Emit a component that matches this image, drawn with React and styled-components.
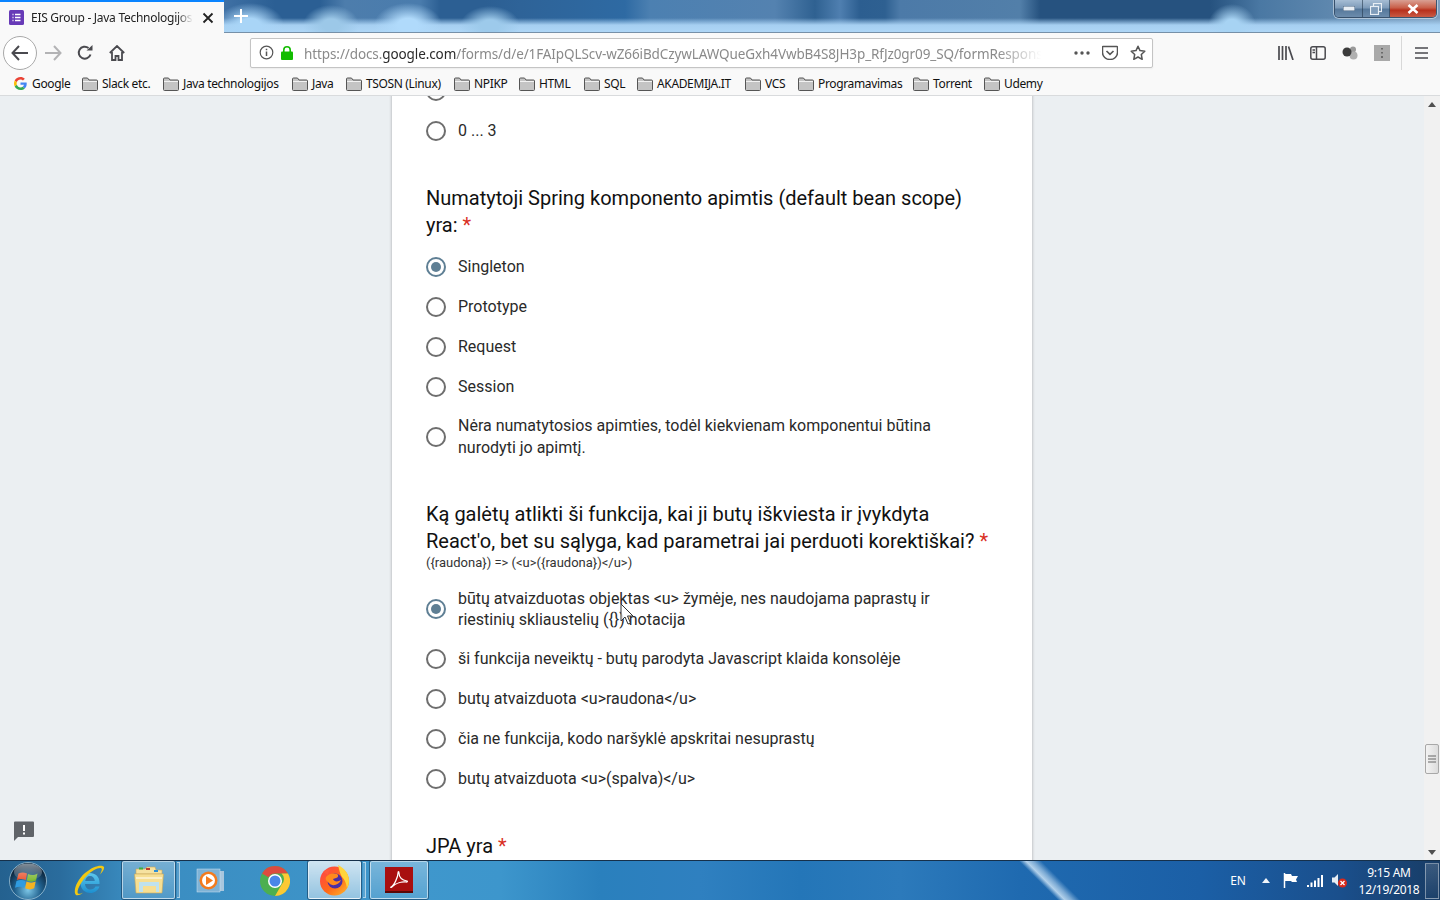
import React from "react";
import styled, { createGlobalStyle } from "styled-components";

const Global = createGlobalStyle`
  html, body { margin: 0; padding: 0; height: 100%; overflow: hidden; }
  * { box-sizing: border-box; }
  #root { height: 100%; }
`;

const Shell = styled.div`
  height: 100vh; display: flex; flex-direction: column; overflow: hidden; position: relative;
  font-family: "Noto Sans", "Open Sans", sans-serif;
`;

/* ---------- title strip ---------- */
const TitleStrip = styled.div`
  height: 33px; flex: none; display: flex; align-items: flex-start;
  border-bottom: 1px solid #7690a8;
  background:
    radial-gradient(ellipse 34px 22px at 250px 25px, #a9d5f7 30%, transparent),
    radial-gradient(ellipse 28px 20px at 331px 25px, #9cc8e8 30%, transparent),
    radial-gradient(ellipse 34px 22px at 408px 25px, #b0dafb 30%, transparent),
    radial-gradient(ellipse 30px 20px at 490px 26px, #9dcaeb 30%, transparent),
    radial-gradient(ellipse 24px 22px at 1232px 26px, #a7d3f3 30%, transparent),
    linear-gradient(180deg, transparent 0 18px, #a6cff1 25px, #aed6f6 100%),
    linear-gradient(90deg, #3f70a4 225px, #2b5f94 275px, #2b5f94 320px, #4d7dac 345px, #4a7cad 420px, #2c5f93 440px, #2c5f93 485px, #2e6398 520px, #2e6aa3 625px, #4c80b1 650px, #5482b0 775px, #2f6191 815px, #4f7fb0 840px, #2c5e90 860px, #2e6091 885px, #4c7aa8 900px, #527fa9 1020px, #26527f 1040px, #26527f 1210px, #4a78a3 1260px, #7d9fbf 1440px);
`;
const Tab = styled.div`
  width: 224px; height: 33px; flex: none; display: flex; align-items: center;
  background: #f9f9f9; border-top: 2px solid #0a84ff; padding-left: 9px; margin-bottom: -1px; position: relative; z-index: 1;
`;
const TabTitle = styled.span`
  font-size: 12px; margin-left: 7px; width: 162px; white-space: nowrap; overflow: hidden; color: #222;
  letter-spacing: -0.27px;
  mask-image: linear-gradient(90deg, #000 90%, transparent);
`;
const TabClose = styled.svg`
  margin-left: 9px; flex: none;
`;
const NewTab = styled.div`
  width: 34px; height: 32px; display: flex; align-items: center; justify-content: center;
`;
const WindowButtons = styled.div`
  margin-left: auto; margin-right: 3px; height: 18px; width: 103px; display: flex; flex: none;
  border: 1px solid rgba(40,60,85,.75); border-top: 0; border-radius: 0 0 5px 5px; overflow: hidden;
  box-shadow: 0 0 0 1px rgba(255,255,255,.45);
`;
const WinBtn = styled.div`
  flex: ${p => p.$grow}; display: flex; align-items: center; justify-content: center;
  background: ${p => p.$close ? "linear-gradient(180deg,#d9a093 0%,#c9604a 45%,#b8301c 60%,#c95a44 100%)" : "linear-gradient(180deg,#a6bdd4 0%,#7f9cba 45%,#56789b 55%,#6c8cac 100%)"};
  border-right: ${p => p.$close ? "0" : "1px solid rgba(30,50,70,.55)"};
`;

/* ---------- nav toolbar ---------- */
const NavBar = styled.div`
  height: 39px; flex: none; background: #f9f9f9; display: flex; align-items: center;
`;
const BackCircle = styled.div`
  width: 34px; height: 34px; margin-left: 3px; border-radius: 50%; background: #fff; border: 1px solid #a9a9a9;
  display: flex; align-items: center; justify-content: center; flex: none;
`;
const NavIcon = styled.div`
  width: 32px; height: 32px; display: flex; align-items: center; justify-content: center; flex: none;
`;
const UrlBar = styled.div`
  width: 903px; height: 30px; margin-left: 117px; flex: none; background: #fff; border: 1px solid #c4c4c4; border-radius: 2px;
  display: flex; align-items: center; padding-left: 8px; box-shadow: 0 1px 2px rgba(0,0,0,.06);
`;
const LockIcon = styled.svg`
  margin-left: 7px; flex: none;
`;
const UrlText = styled.div`
  width: 737px; flex: none; margin-left: 11px; padding-top: 2px; white-space: nowrap; overflow: hidden; font-size: 13.5px; color: #8a8a8a; letter-spacing: -0.1px;
  mask-image: linear-gradient(90deg, #000 94%, transparent);
  b { font-weight: 400; color: #2a2a2a; }
`;
const UrlActions = styled.div`
  display: flex; align-items: center; margin-left: 33px; gap: 12px; flex: none;
`;
const RightTools = styled.div`
  display: flex; align-items: center; margin-left: 117px; flex: none;
`;
const ToolSep = styled.div`
  width: 1px; height: 34px; background: #d8d8d8; margin: 0 3px 0 3px; flex: none;
`;

/* ---------- bookmarks ---------- */
const Bookmarks = styled.div`
  height: 24px; flex: none; background: #f9f9f9; border-bottom: 1px solid #d9dbdd; display: flex; align-items: center; padding-left: 14px;
`;
const Bookmark = styled.div`
  width: ${p => p.$w}px; flex: none; display: flex; align-items: center; gap: ${p => p.$gap}px;
  font-size: 12px; letter-spacing: -0.35px; color: #111; white-space: nowrap;
`;

/* ---------- page ---------- */
const Viewport = styled.div`
  flex: 1; min-height: 0; display: flex; background: #ebeff2; overflow: hidden;
`;
const PageArea = styled.div`
  flex: 1; display: flex; justify-content: center; overflow: hidden; position: relative;
`;
const Card = styled.main`
  width: 640px; margin-top: -25px; background: #fff; padding: 0 34px; flex: none; height: 900px;
  box-shadow: 0 0 3px rgba(0,0,0,.3);
  font-family: Roboto, "Noto Sans", sans-serif; color: #202124;
`;
const Question = styled.h2`
  margin: 34px 0 ${p => p.$desc ? "0" : "8px"};
  font-size: 20px; line-height: 27px; font-weight: 400; color: #111;
`;
const Star = styled.span`
  color: #d93025; margin-left: 5px;
`;
const Description = styled.div`
  font-size: 13px; line-height: 16px; color: #333; margin-bottom: 8px;
`;
const OptionRow = styled.div`
  display: flex; align-items: center; gap: 12px; min-height: ${p => p.$h || 40}px;
`;
const Radio = styled.span`
  width: 20px; height: 20px; border-radius: 50%; flex: none; display: flex; align-items: center; justify-content: center;
  border: 2px solid ${p => p.$on ? "#5f7f94" : "#6e6e6e"};
  &::after { content: ""; width: 10px; height: 10px; border-radius: 50%; background: ${p => p.$on ? "#5f7f94" : "transparent"}; }
`;
const OptionText = styled.div`
  font-size: 16px; line-height: ${p => p.$lh || 22}px; width: 490px; color: #2a2a2a;
`;
const Feedback = styled.div`
  position: absolute; left: 13px; bottom: 18px; width: 22px; height: 22px;
`;
const Cursor = styled.svg`
  position: absolute; left: 620px; top: 507px;
`;

/* ---------- scrollbar ---------- */
const ScrollBar = styled.div`
  width: 16px; flex: none; background: #f1f1f1; display: flex; flex-direction: column; align-items: center;
`;
const ScrollArrow = styled.div`
  height: 16px; display: flex; align-items: center; justify-content: center; ${p => p.$down ? "margin-top:auto;" : ""}
`;
const Thumb = styled.div`
  width: 14px; height: 30px; margin-top: 632px; background: linear-gradient(90deg,#f3f3f3,#dcdcdc); border: 1px solid #a8a8a8; border-radius: 2px;
  display: flex; align-items: center; justify-content: center;
`;

/* ---------- taskbar ---------- */
const Taskbar = styled.div`
  height: 40px; flex: none; display: flex; align-items: stretch; border-top: 1px solid #16304a; overflow: hidden;
  background:
    linear-gradient(45deg, transparent 748px, rgba(215,235,250,.8) 753px, rgba(215,235,250,.5) 758px, transparent 764px),
    linear-gradient(90deg, #24618f 0, #2a6c9d 60px, #3a8cc0 130px, #3f97cc 420px, #3d96cc 500px, #2a80bd 600px, #2f80c0 700px, #2476b8 800px, #2c7abb 900px, #1f6ab0 1020px, #1b5fa6 1200px, #1a4f8c 1340px, #183c65 1440px);
`;
const Slot = styled.div`
  width: ${p => p.$w}px; margin-left: ${p => p.$ml || 0}px; flex: none; display: flex; align-items: center; justify-content: center;
  ${p => p.$pinned ? `
    border: 1px solid rgba(255,255,255,.55); border-radius: 2px; margin-bottom: 1px;
    background: linear-gradient(180deg, rgba(255,255,255,${p.$bright ? ".75" : ".3"}), rgba(255,255,255,${p.$bright ? ".45" : ".12"}));
    box-shadow: 0 0 0 1px rgba(10,40,70,.5);
  ` : ""}
`;
const StackEdge = styled.div`
  width: 3px; margin: 1px 0 2px 2px; border: 1px solid rgba(255,255,255,.5); border-left: 0; flex: none; background: rgba(255,255,255,.15);
`;
const Tray = styled.div`
  margin-left: auto; display: flex; align-items: center; color: #fff; font-size: 12px;
`;
const TrayText = styled.span`
  width: ${p => p.$w}px; text-align: center; letter-spacing: -0.2px;
`;
const TrayIcon = styled.div`
  width: ${p => p.$w}px; display: flex; align-items: center; justify-content: center;
`;
const Clock = styled.div`
  width: 72px; text-align: center; line-height: 17px; font-size: 12px; letter-spacing: -0.3px; margin-left: 2px;
`;
const ShowDesktop = styled.div`
  width: 14px; height: 36px; margin: 0 1px 0 0; border: 1px solid rgba(255,255,255,.4); background: linear-gradient(180deg,rgba(255,255,255,.15),rgba(255,255,255,.02));
`;

/* ---------- icons ---------- */
const FolderIcon = () => (
  <svg width="16" height="14" viewBox="0 0 16 14">
    <path d="M.5 12.5V2a1 1 0 0 1 1-1h4l1.500 2h7.500a1 1 0 0 1 1 1v8.500a1 1 0 0 1-1 1h-13a1 1 0 0 1-1-1Z" fill="#c4c4c4" stroke="#555" />
    <path d="M1 4.500h14" stroke="#f2f2f2" />
  </svg>
);
const GoogleG = () => (
  <svg width="13" height="13" viewBox="0 0 48 48">
    <path fill="#EA4335" d="M24 9.5c3.5 0 6.7 1.3 9.1 3.5l6.8-6.8C35.800 2.400 30.300 0 24 0 14.600 0 6.500 5.400 2.600 13.200l7.900 6.100C12.400 13.700 17.700 9.500 24 9.500z"/>
    <path fill="#4285F4" d="M46.900 24.500c0-1.600-.1-3.100-.4-4.500H24v9h12.900c-.6 3-2.200 5.500-4.700 7.200l7.700 6c4.500-4.200 7-10.300 7-17.700z"/>
    <path fill="#FBBC05" d="M10.500 28.700c-.5-1.400-.8-3-.8-4.700s.3-3.200.8-4.700l-7.900-6.100C.9 16.500 0 20.100 0 24s.9 7.500 2.600 10.800l7.900-6.100z"/>
    <path fill="#34A853" d="M24 48c6.500 0 11.900-2.100 15.900-5.800l-7.700-6c-2.200 1.400-4.900 2.300-8.200 2.300-6.300 0-11.600-4.200-13.500-9.800l-7.900 6.100C6.500 42.600 14.600 48 24 48z"/>
  </svg>
);
const FormsIcon = () => (
  <svg width="15" height="15" viewBox="0 0 15 15">
    <rect width="15" height="15" rx="1.500" fill="#673ab7" />
    <path d="M3.500 4.500h1M6 4.500h5.500M3.500 7.500h1M6 7.500h5.500M3.500 10.500h1M6 10.500h5.500" stroke="#fff" strokeWidth="1.500" />
  </svg>
);
const ink = "#4a4a4f";
const Orb = () => (
  <svg width="38" height="38" viewBox="0 0 38 38">
    <defs>
      <radialGradient id="orb" cx="50%" cy="75%" r="65%"><stop offset="0" stopColor="#7cc6e6" /><stop offset=".55" stopColor="#1f5f8c" /><stop offset="1" stopColor="#0b2238" /></radialGradient>
      <linearGradient id="gloss" x1="0" y1="0" x2="0" y2="1"><stop offset="0" stopColor="#fff" stopOpacity=".5" /><stop offset="1" stopColor="#fff" stopOpacity=".05" /></linearGradient>
    </defs>
    <circle cx="19" cy="19" r="18.500" fill="url(#orb)" stroke="#9fc4d8" strokeWidth=".8" />
    <path d="M9.500 11.500c3-1.500 5.500-1.500 8.500 0l-1.200 6.500c-3-1.400-5.500-1.400-9 0Z" fill="#e8512b" />
    <path d="M19 12c3 1.500 6 1.500 9.500-.5L27 18.500c-3 1.500-6 1.500-9.200 0Z" fill="#7cb82f" />
    <path d="M7.500 19c3-1.400 6-1.400 9 0l-1.200 6.800c-3-1.500-6-1.500-9.300 0Z" fill="#2f9be0" />
    <path d="M17.500 19.500c3 1.500 6 1.500 9.200 0l-1.500 6.800c-3 1.500-6 1.500-9 0Z" fill="#f4b322" />
    <ellipse cx="19" cy="10" rx="14" ry="8.500" fill="url(#gloss)" />
  </svg>
);
const IeIcon = () => (
  <svg width="32" height="32" viewBox="0 0 32 32">
    <defs><linearGradient id="ie" x1="0" y1="0" x2="0" y2="1"><stop offset="0" stopColor="#5cc8ee" /><stop offset="1" stopColor="#1c8fd0" /></linearGradient></defs>
    <path d="M16.500 8c6 0 10 3.600 10 9.500v1.500H12c.3 3.500 2.500 5.500 5.500 5.500 2.300 0 4-1 5-3h4c-1.500 4-4.800 6.500-9.200 6.500C11.500 28 7.500 23.700 7.500 18S11 8 16.500 8Zm-4.300 8h9.600c-.2-3-2-5-4.800-5-2.600 0-4.400 2-4.800 5Z" fill="url(#ie)" />
    <path d="M3 30C-.5 26 4 15 12 8s17-9 19-6c.6 2-2 5.500-4 7.500 1-2.500 2.500-5 1.500-6-2-1.700-10 2.300-15 7.500S3 26 5 28.500c1.500 1 4-.3 6-1.500-3 2.500-6.500 4-8 3Z" fill="#f2c811" />
  </svg>
);
const ExplorerIcon = () => (
  <svg width="32" height="30" viewBox="0 0 32 30">
    <path d="M3 4h9l2-2h8l1 3h6v4H3Z" fill="#f6e2a0" stroke="#c9a85a" strokeWidth=".6" />
    <rect x="6" y="2.500" width="4" height="2" fill="#3db03d" /><rect x="13" y="3" width="4" height="2" fill="#c03a2b" /><rect x="21" y="5" width="4" height="2" fill="#2d8fd5" />
    <path d="M1.500 9h29l-1.500 19H3Z" fill="#f7df92" stroke="#c9a85a" strokeWidth=".6" />
    <path d="M6 17h20v10h-3v-6H10v6H6Z" fill="#bfe2ee" />
    <path d="M3 12h26v2H3Z" fill="#fff" opacity=".5" />
  </svg>
);
const WmpIcon = () => (
  <svg width="30" height="26" viewBox="0 0 30 26">
    <rect x="8" y="3" width="20" height="20" fill="#a9c7de" />
    <rect x="1" y="1" width="23" height="23" fill="#7fb3d6" stroke="#cfe3f1" strokeWidth=".5" />
    <circle cx="12.500" cy="12.500" r="9" fill="#f37b1d" />
    <circle cx="12.500" cy="12.500" r="6.500" fill="#fff" />
    <path d="M10 8l7 4.500-7 4.500Z" fill="#f37b1d" />
  </svg>
);
const ChromeIcon = () => (
  <svg width="30" height="30" viewBox="0 0 30 30">
    <circle cx="15" cy="15" r="15" fill="#4caf50" />
    <path d="M15 0a15 15 0 0 1 13 7.500H15a7.500 7.500 0 0 0-6.500 3.800L2.100 7.400A15 15 0 0 1 15 0Z" fill="#dd4b3e" />
    <path d="M28 7.500A15 15 0 0 1 15 30l6.500-11.300a7.500 7.500 0 0 0 0-11.200Z" fill="#fcc934" />
    <circle cx="15" cy="15" r="7" fill="#fff" /><circle cx="15" cy="15" r="5.500" fill="#4a86e8" />
  </svg>
);
const FirefoxIcon = () => (
  <svg width="32" height="32" viewBox="0 0 32 32">
    <defs><linearGradient id="ff" x1="0" y1="0" x2="1" y2="1"><stop offset="0" stopColor="#ff3f4e" /><stop offset=".55" stopColor="#ff6a18" /><stop offset="1" stopColor="#ffbd2e" /></linearGradient></defs>
    <circle cx="15.500" cy="17" r="14.500" fill="url(#ff)" />
    <path d="M19 1c6 3 11 8 11 16 0 3-1 5-2 7-1-5-2-8-5-11-2-3-3-8-4-12Z" fill="#ffd43a" />
    <circle cx="16" cy="17" r="7.500" fill="#4b2fa5" />
    <path d="M7 13c3-4 8-4 11-3 2 1 1 4-1 4l-3 1c1 3 5 3 8 1-2 5-9 7-12 3-3-2-4-4-3-6Z" fill="#ff8a1e" />
    <path d="M4 8c2-2 5-3 8-3-2 2-3 4-3 6Z" fill="#ff5a3c" />
  </svg>
);
const AcrobatIcon = () => (
  <svg width="28" height="28" viewBox="0 0 28 28">
    <rect width="28" height="26" y="1" fill="#a80f0f" />
    <rect width="28" height="2" y="25" fill="#5a0808" />
    <path d="M6 21c3-1 7-10 7-14 0-2 1-2 1 0 0 4 3 7 8 8 1 .5 0 1.200-1 1-4-.3-10 1-13 4-1 1.300-3 2-2 1Z" fill="none" stroke="#fff" strokeWidth="1.200" />
  </svg>
);

const bookmarks = [
  ["Slack etc.", 81], ["Java technologijos", 129], ["Java", 54], ["TSOSN (Linux)", 108], ["NPIKP", 65],
  ["HTML", 65], ["SQL", 53], ["AKADEMIJA.IT", 108], ["VCS", 53], ["Programavimas", 115], ["Torrent", 71], ["Udemy", 70],
];

const Option = ({ on, children, h, lh }) => (
  <OptionRow $h={h}>
    <Radio $on={on} />
    <OptionText $lh={lh}>{children}</OptionText>
  </OptionRow>
);

export default function App() {
  return (
    <Shell>
      <Global />
      <TitleStrip>
        <Tab>
          <FormsIcon />
          <TabTitle>EIS Group - Java Technologijos egzaminas</TabTitle>
          <TabClose width="12" height="12" viewBox="0 0 12 12"><path d="M1.500 1.500l9 9M10.500 1.500l-9 9" stroke="#222" strokeWidth="1.800" /></TabClose>
        </Tab>
        <NewTab><svg width="14" height="14" viewBox="0 0 14 14"><path d="M7 0v14M0 7h14" stroke="#fff" strokeWidth="2" /></svg></NewTab>
        <WindowButtons>
          <WinBtn $grow="28"><svg width="12" height="5"><rect width="12" height="5" fill="#e8eef4" stroke="#44617f" /></svg></WinBtn>
          <WinBtn $grow="27"><svg width="12" height="12" viewBox="0 0 12 12"><rect x="3.500" y=".5" width="8" height="8" fill="none" stroke="#e8eef4" strokeWidth="1.200" /><rect x=".5" y="3.500" width="8" height="8" fill="#7f9cba" stroke="#e8eef4" strokeWidth="1.200" /></svg></WinBtn>
          <WinBtn $grow="47" $close><svg width="12" height="10" viewBox="0 0 12 10"><path d="M1.500 1l9 8M10.500 1l-9 8" stroke="#fff" strokeWidth="2.600" /></svg></WinBtn>
        </WindowButtons>
      </TitleStrip>

      <NavBar>
        <BackCircle><svg width="18" height="16" viewBox="0 0 18 16"><path d="M8 1L1.500 8 8 15M1.500 8H17" fill="none" stroke={ink} strokeWidth="2" /></svg></BackCircle>
        <NavIcon><svg width="17" height="16" viewBox="0 0 17 16"><path d="M9 1l6.500 7L9 15M15.500 8H0" fill="none" stroke="#b3b3b5" strokeWidth="2" /></svg></NavIcon>
        <NavIcon><svg width="16" height="16" viewBox="0 0 16 16"><path d="M13.500 9.500A6 6 0 1 1 11.500 3" fill="none" stroke={ink} strokeWidth="2" /><path d="M9.500 5.500h6v-5.500Z" fill={ink} /></svg></NavIcon>
        <NavIcon><svg width="16" height="16" viewBox="0 0 16 16"><path d="M.8 8L8 1l7.200 7M3 7v8h3.500v-4h3v4H13V7" fill="none" stroke={ink} strokeWidth="1.800" /></svg></NavIcon>
        <UrlBar>
          <svg width="15" height="15" viewBox="0 0 15 15"><circle cx="7.500" cy="7.500" r="6.300" fill="none" stroke="#555" strokeWidth="1.200" /><path d="M7.500 6.500v4.500M7.500 3.800v1.400" stroke="#555" strokeWidth="1.500" /></svg>
          <LockIcon width="12" height="14" viewBox="0 0 12 14"><rect y="5.500" width="12" height="8.500" rx="1" fill="#12bc00" /><path d="M2.800 6V4a3.200 3.200 0 0 1 6.400 0v2" fill="none" stroke="#12bc00" strokeWidth="1.600" /></LockIcon>
          <UrlText>https://docs.<b>google.com</b>/forms/d/e/1FAIpQLScv-wZ66iBdCzywLAWQueGxh4VwbB4S8JH3p_RfJz0gr09_SQ/formResponse</UrlText>
          <UrlActions>
            <svg width="16" height="4" viewBox="0 0 16 4"><circle cx="2" cy="2" r="1.700" fill="#555" /><circle cx="8" cy="2" r="1.700" fill="#555" /><circle cx="14" cy="2" r="1.700" fill="#555" /></svg>
            <svg width="16" height="15" viewBox="0 0 16 15"><path d="M1 1.500h14a.5.5 0 0 1 .5.500v5.500a7.500 7 0 0 1-15 0V2a.5.5 0 0 1 .5-.5Z" fill="none" stroke="#555" strokeWidth="1.500" /><path d="M4.500 6L8 9.300 11.500 6" fill="none" stroke="#555" strokeWidth="1.700" /></svg>
            <svg width="16" height="16" viewBox="0 0 16 16"><path d="M8 1.200l2 4.400 4.800.6-3.500 3.300.9 4.800L8 12l-4.200 2.300.9-4.800L1.200 6.200 6 5.600Z" fill="none" stroke="#555" strokeWidth="1.500" strokeLinejoin="round" /></svg>
          </UrlActions>
        </UrlBar>
        <RightTools>
          <NavIcon><svg width="16" height="14" viewBox="0 0 16 14"><path d="M1 0v14M4.500 0v14M8 0v14M10.500.5l4.500 13.500" stroke={ink} strokeWidth="1.700" fill="none" /></svg></NavIcon>
          <NavIcon><svg width="16" height="14" viewBox="0 0 16 14"><rect x=".8" y=".8" width="14.400" height="12.400" rx="2" fill="none" stroke={ink} strokeWidth="1.500" /><path d="M6.500 1v12M2.500 4h2.500M2.500 6.500h2.500" stroke={ink} strokeWidth="1.500" /></svg></NavIcon>
          <NavIcon><svg width="16" height="14" viewBox="0 0 16 14"><circle cx="11" cy="3.500" r="3" fill="#9a9a9a" /><circle cx="11.500" cy="9.500" r="4" fill="#b0b0b0" /><circle cx="5" cy="6" r="4.500" fill="#3c3c3c" /></svg></NavIcon>
          <NavIcon><svg width="16" height="16" viewBox="0 0 16 16"><rect width="16" height="16" fill="#a9a9a9" /><path d="M8 3v1.500M8 7v1.500M8 11v2" stroke="#555" strokeWidth="1.500" /></svg></NavIcon>
          <ToolSep />
          <NavIcon><svg width="13" height="12" viewBox="0 0 13 12"><path d="M0 1h13M0 6h13M0 11h13" stroke={ink} strokeWidth="1.700" /></svg></NavIcon>
        </RightTools>
      </NavBar>

      <Bookmarks>
        <Bookmark $w={68} $gap={5}><GoogleG />Google</Bookmark>
        {bookmarks.map(([t, w]) => <Bookmark key={t} $w={w} $gap={4}><FolderIcon />{t}</Bookmark>)}
      </Bookmarks>

      <Viewport>
        <PageArea>
          <Card>
            <Option>1 ... 3</Option>
            <Option>0 ... 3</Option>

            <Question>Numatytoji Spring komponento apimtis (default bean scope) yra:<Star>*</Star></Question>
            <Option on>Singleton</Option>
            <Option>Prototype</Option>
            <Option>Request</Option>
            <Option>Session</Option>
            <Option h={60}>Nėra numatytosios apimties, todėl kiekvienam komponentui būtina nurodyti jo apimtį.</Option>

            <Question $desc>Ką galėtų atlikti ši funkcija, kai ji butų iškviesta ir įvykdyta React'o, bet su sąlyga, kad parametrai jai perduoti korektiškai?<Star>*</Star></Question>
            <Description>{"({raudona}) => (<u>({raudona})</u>)"}</Description>
            <Option on h={60} lh={21}>{"būtų atvaizduotas objektas <u> žymėje, nes naudojama paprastų ir riestinių skliaustelių ({}) notacija"}</Option>
            <Option>ši funkcija neveiktų - butų parodyta Javascript klaida konsolėje</Option>
            <Option>{"butų atvaizduota <u>raudona</u>"}</Option>
            <Option>čia ne funkcija, kodo naršyklė apskritai nesuprastų</Option>
            <Option>{"butų atvaizduota <u>(spalva)</u>"}</Option>

            <Question>JPA yra<Star>*</Star></Question>
          </Card>
          <Feedback>
            <svg width="22" height="22" viewBox="0 0 22 22"><path d="M2 1.500h18a1 1 0 0 1 1 1V16a1 1 0 0 1-1 1H5l-4 4V2.500a1 1 0 0 1 1-1Z" fill="#5f6368" /><path d="M11 5v6M11 12.500v2" stroke="#fff" strokeWidth="2" /></svg>
          </Feedback>
          <Cursor width="14" height="22" viewBox="0 0 14 22"><path d="M1 1v17l4-4 3 7 2.500-1-3-7h5.500Z" fill="#fff" fillOpacity=".85" stroke="#333" strokeWidth="1" /></Cursor>
        </PageArea>
        <ScrollBar>
          <ScrollArrow><svg width="8" height="5"><path d="M4 0l4 5H0Z" fill="#505050" /></svg></ScrollArrow>
          <Thumb><svg width="8" height="8"><path d="M0 1h8M0 4h8M0 7h8" stroke="#666" /></svg></Thumb>
          <ScrollArrow $down><svg width="8" height="5"><path d="M4 5l4-5H0Z" fill="#505050" /></svg></ScrollArrow>
        </ScrollBar>
      </Viewport>

      <Taskbar>
        <Slot $w={55}><Orb /></Slot>
        <Slot $w={67}><IeIcon /></Slot>
        <Slot $w={53} $pinned><ExplorerIcon /></Slot>
        <StackEdge />
        <Slot $w={61}><WmpIcon /></Slot>
        <Slot $w={67}><ChromeIcon /></Slot>
        <Slot $w={53} $pinned $bright><FirefoxIcon /></Slot>
        <StackEdge />
        <Slot $w={58} $ml={4} $pinned><AcrobatIcon /></Slot>
        <Tray>
          <TrayText $w={30}>EN</TrayText>
          <TrayIcon $w={26}><svg width="8" height="5"><path d="M4 0l4 5H0Z" fill="#f2f6fa" /></svg></TrayIcon>
          <TrayIcon $w={24}><svg width="16" height="15" viewBox="0 0 16 15"><path d="M1.500 0v15" stroke="#fff" strokeWidth="1.500" /><path d="M2 1h6l1 2h6l-2 3.500 1 2.500H9l-1-1H2Z" fill="#fff" /></svg></TrayIcon>
          <TrayIcon $w={24}><svg width="16" height="12" viewBox="0 0 16 12"><path d="M1 10v2M4.500 7.500V12M8 5.500V12M11.500 3v9M15 0v12" stroke="#fff" strokeWidth="2" /></svg></TrayIcon>
          <TrayIcon $w={24}><svg width="17" height="15" viewBox="0 0 17 15"><path d="M1 4.500h2.500L7 1v12L3.500 9.500H1Z" fill="#e8eef4" /><circle cx="11.500" cy="10" r="4.500" fill="#d9291c" /><path d="M9.500 8l4 4M13.500 8l-4 4" stroke="#fff" strokeWidth="1.300" /></svg></TrayIcon>
          <Clock>9:15 AM<br />12/19/2018</Clock>
          <ShowDesktop />
        </Tray>
      </Taskbar>
    </Shell>
  );
}
